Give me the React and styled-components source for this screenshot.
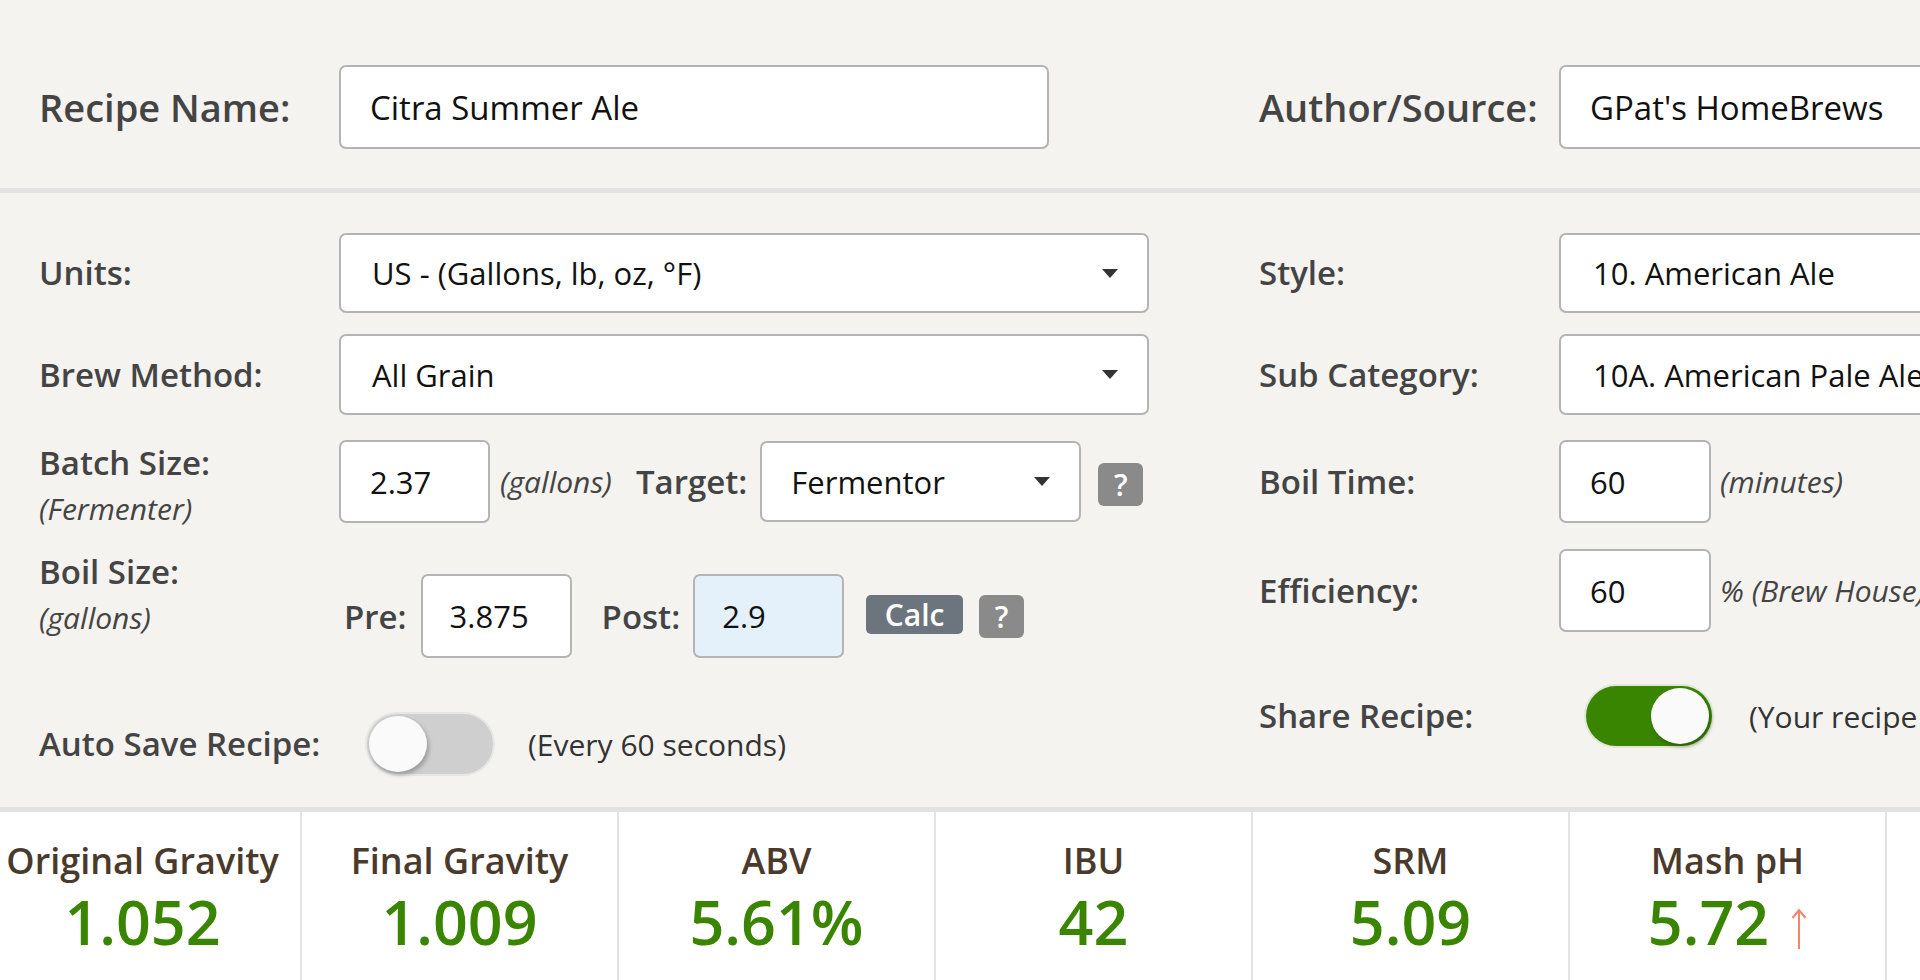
import styled, { createGlobalStyle } from 'styled-components'

const GlobalStyle = createGlobalStyle`
  body {
    margin: 0;
    background: #f4f3ef;
    font-family: "Open Sans", "Liberation Sans", sans-serif;
    overflow: hidden;
  }
`

const Page = styled.div`
  width: 1920px;
  height: 980px;
  overflow: hidden;
  background: #f4f3ef;
`

const Header = styled.div`
  display: flex;
  align-items: center;
  gap: 110px;
  height: 162px;
  padding: 26px 0 0 39px;
  border-bottom: 5px solid #e2e2e2;
`

const Form = styled.div`
  display: flex;
  gap: 110px;
  padding: 40px 0 0 39px;
  height: 574px;
  border-bottom: 5px solid #e2e2e2;
`

const Column = styled.div`
  width: 1110px;
  flex-shrink: 0;
  display: flex;
  flex-direction: column;
`

const Row = styled.div`
  display: flex;
  align-items: ${(p) => p.$align || 'center'};
  margin-top: ${(p) => p.$mt || 0}px;
  width: ${(p) => (p.$w ? `${p.$w}px` : 'auto')};
  flex-shrink: 0;
`

const Label = styled.div`
  width: 300px;
  flex-shrink: 0;
  font-size: ${(p) => p.$size || 33}px;
  font-weight: 600;
  color: #444;
  line-height: 46px;
`

const Note = styled.div`
  font-style: italic;
  font-weight: 400;
  font-size: 30px;
  color: #444;
`

const Fields = styled.div`
  display: flex;
  align-items: center;
  margin-top: ${(p) => p.$mt || 0}px;
  padding-left: ${(p) => p.$pl || 0}px;
`

const TextBox = styled.input`
  box-sizing: border-box;
  width: ${(p) => p.$w}px;
  height: ${(p) => p.$h || 83}px;
  border: 2px solid #b4b4b4;
  border-radius: 7px;
  background: ${(p) => (p.$blue ? '#e4f0fa' : '#fff')};
  padding: 0 0 0 ${(p) => p.$pad || 29}px;
  font-family: "Open Sans", "Liberation Sans", sans-serif;
  font-size: ${(p) => p.$size || 31}px;
  color: #111;
  outline: none;
  flex-shrink: 0;
`

const Select = styled.div`
  box-sizing: border-box;
  width: ${(p) => p.$w}px;
  height: ${(p) => p.$h || 81}px;
  border: 2px solid #b4b4b4;
  border-radius: 7px;
  background: #fff;
  display: flex;
  align-items: center;
  justify-content: space-between;
  padding: 0 29px 0 ${(p) => p.$pad || 31}px;
  font-size: 31px;
  color: #111;
  flex-shrink: 0;
`

const Caret = () => (
  <svg width="16" height="9" viewBox="0 0 16 9">
    <path d="M0 0 H16 L8 9 Z" fill="#333" />
  </svg>
)

const Unit = styled.span`
  font-style: italic;
  font-size: 30px;
  color: #444;
  margin-left: ${(p) => p.$ml || 9}px;
  white-space: nowrap;
`

const Inline = styled.span`
  font-size: 33px;
  font-weight: 600;
  color: #444;
  margin: 0 ${(p) => p.$mr || 12}px 0 ${(p) => p.$ml || 0}px;
`

const Help = styled.div`
  width: 45px;
  height: 43px;
  border-radius: 6px;
  background: #8a8a8a;
  color: #fff;
  font-size: 30px;
  font-weight: 600;
  display: flex;
  align-items: center;
  justify-content: center;
  margin-left: ${(p) => p.$ml || 15}px;
  margin-top: ${(p) => p.$mt || 0}px;
  flex-shrink: 0;
`

const CalcButton = styled.div`
  width: 97px;
  height: 39px;
  border-radius: 5px;
  background: #6c757d;
  color: #fff;
  font-size: 30px;
  font-weight: 600;
  display: flex;
  align-items: center;
  justify-content: center;
  margin-left: 22px;
  margin-top: -3px;
`

const Toggle = styled.div`
  position: relative;
  width: 126px;
  height: 60px;
  border-radius: 30px;
  background: ${(p) => (p.$on ? '#398400' : '#cfcfcf')};
  box-shadow: 0 0 0 2px ${(p) => (p.$on ? '#dfe8d6' : '#e6e6e4')};
  margin-left: ${(p) => p.$ml}px;
  flex-shrink: 0;

  &::after {
    content: '';
    position: absolute;
    top: 2px;
    ${(p) => (p.$on ? 'right: 3px;' : 'left: 2px;')}
    width: 58px;
    height: 56px;
    border-radius: 50%;
    background: #fafafa;
    box-shadow: 2px 3px 4px rgba(0, 0, 0, 0.25);
  }
`

const ToggleNote = styled.span`
  font-size: 30px;
  color: #333;
  margin-left: ${(p) => p.$ml}px;
  white-space: nowrap;
`

const Stats = styled.div`
  display: flex;
  background: #fff;
  height: 168px;
  margin-left: -15px;
`

const Stat = styled.div`
  width: 315px;
  flex-shrink: 0;
  border-right: 2px solid #e4e4e4;
  text-align: center;
  padding-top: 24px;
`

const StatLabel = styled.div`
  font-size: 36px;
  font-weight: 600;
  color: #4a3a2c;
  line-height: 50px;
`

const StatValue = styled.div`
  font-size: 61px;
  font-weight: 600;
  color: #3a8500;
  line-height: 72px;
  display: flex;
  justify-content: center;
  align-items: center;
  gap: 22px;
`

const UpArrow = () => (
  <svg width="16" height="42" viewBox="0 0 16 42" style={{ marginTop: 14 }}>
    <path d="M8 41 V2 M1.5 10 L8 2 L14.5 10" stroke="#f3866a" strokeWidth="2" fill="none" />
  </svg>
)

const stats = [
  { label: 'Original Gravity', value: '1.052' },
  { label: 'Final Gravity', value: '1.009' },
  { label: 'ABV', value: '5.61%' },
  { label: 'IBU', value: '42' },
  { label: 'SRM', value: '5.09' },
  { label: 'Mash pH', value: '5.72', arrow: true },
  { label: 'Color', value: '' },
]

const App = () => {
  return (
    <Page>
      <GlobalStyle />
      <Header>
        <Row $w={1110}>
          <Label $size={38}>Recipe Name:</Label>
          <TextBox $w={710} $h={84} $size={33} readOnly defaultValue="Citra Summer Ale" />
        </Row>
        <Row $w={1110}>
          <Label $size={38}>Author/Source:</Label>
          <TextBox $w={810} $h={84} $size={33} $pad={29} readOnly defaultValue="GPat's HomeBrews" />
        </Row>
      </Header>

      <Form>
        <Column>
          <Row>
            <Label>Units:</Label>
            <Select $w={810} $h={80}>
              <span>US - (Gallons, lb, oz, °F)</span>
              <Caret />
            </Select>
          </Row>
          <Row $mt={21}>
            <Label>Brew Method:</Label>
            <Select $w={810}>
              <span>All Grain</span>
              <Caret />
            </Select>
          </Row>
          <Row $mt={25} $align="flex-start">
            <Label>
              Batch Size:
              <Note>(Fermenter)</Note>
            </Label>
            <Fields>
              <TextBox $w={151} readOnly defaultValue="2.37" />
              <Unit $ml={10}>(gallons)</Unit>
              <Inline $ml={24} $mr={13}>Target:</Inline>
              <Select $w={321} $pad={29}>
                <span>Fermentor</span>
                <Caret />
              </Select>
              <Help $ml={17} $mt={5}>?</Help>
            </Fields>
          </Row>
          <Row $mt={17} $align="flex-start">
            <Label>
              Boil Size:
              <Note>(gallons)</Note>
            </Label>
            <Fields $mt={25} $pl={5}>
              <Inline $mr={14}>Pre:</Inline>
              <TextBox $w={151} $h={84} $pad={27} readOnly defaultValue="3.875" />
              <Inline $ml={30} $mr={13}>Post:</Inline>
              <TextBox $w={151} $h={84} $pad={27} $blue readOnly defaultValue="2.9" />
              <CalcButton>Calc</CalcButton>
              <Help $ml={16}>?</Help>
            </Fields>
          </Row>
          <Row $mt={56}>
            <Label>Auto Save Recipe:</Label>
            <Toggle $ml={28} />
            <ToggleNote $ml={35}>(Every 60 seconds)</ToggleNote>
          </Row>
        </Column>

        <Column>
          <Row>
            <Label>Style:</Label>
            <Select $w={810} $h={80} $pad={32}>
              <span>10. American Ale</span>
              <Caret />
            </Select>
          </Row>
          <Row $mt={21}>
            <Label>Sub Category:</Label>
            <Select $w={810} $pad={32}>
              <span>10A. American Pale Ale</span>
              <Caret />
            </Select>
          </Row>
          <Row $mt={25}>
            <Label>Boil Time:</Label>
            <TextBox $w={152} readOnly defaultValue="60" />
            <Unit>(minutes)</Unit>
          </Row>
          <Row $mt={26}>
            <Label>Efficiency:</Label>
            <TextBox $w={152} readOnly defaultValue="60" />
            <Unit>% (Brew House)</Unit>
          </Row>
          <Row $mt={54}>
            <Label>Share Recipe:</Label>
            <Toggle $on $ml={27} />
            <ToggleNote $ml={37}>(Your recipe will be public)</ToggleNote>
          </Row>
        </Column>
      </Form>

      <Stats>
        {stats.map((s) => (
          <Stat key={s.label}>
            <StatLabel>{s.label}</StatLabel>
            <StatValue>
              {s.value}
              {s.arrow && <UpArrow />}
            </StatValue>
          </Stat>
        ))}
      </Stats>
    </Page>
  )
}

export default App
